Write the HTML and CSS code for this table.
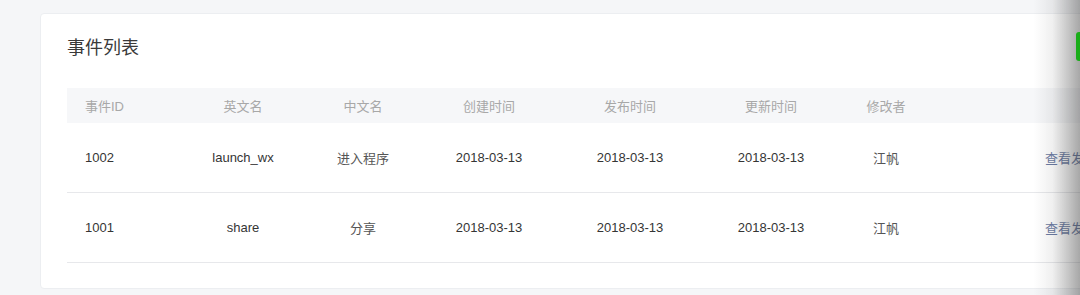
FILE: index.html
```html
<!DOCTYPE html>
<html lang="zh">
<head>
<meta charset="utf-8">
<link rel="stylesheet" href="styles.css">
</head>
<body>
<div class="card">
  <h2 class="title">事件列表</h2>
  <div class="table">
    <div class="row head">
      <div class="c first">事件ID</div>
      <div class="c">英文名</div>
      <div class="c">中文名</div>
      <div class="c">创建时间</div>
      <div class="c">发布时间</div>
      <div class="c">更新时间</div>
      <div class="c">修改者</div>
      <div class="c act"></div>
    </div>
    <div class="row">
      <div class="c first">1002</div>
      <div class="c">launch_wx</div>
      <div class="c cjk">进入程序</div>
      <div class="c">2018-03-13</div>
      <div class="c">2018-03-13</div>
      <div class="c">2018-03-13</div>
      <div class="c cjk">江帆</div>
      <div class="c act"><a class="link">查看发布记录</a></div>
    </div>
    <div class="row">
      <div class="c first">1001</div>
      <div class="c">share</div>
      <div class="c cjk">分享</div>
      <div class="c">2018-03-13</div>
      <div class="c">2018-03-13</div>
      <div class="c">2018-03-13</div>
      <div class="c cjk">江帆</div>
      <div class="c act"><a class="link">查看发布记录</a></div>
    </div>
  </div>
</div>
<div class="edge-shadow"></div>
<div class="green-tab"></div>
</body>
</html>
```
FILE: styles.css
```css
html, body {
  margin: 0;
  padding: 0;
  width: 1080px;
  height: 295px;
  overflow: hidden;
  background: #f5f6f8;
  font-family: "Liberation Sans", "Noto Sans CJK SC", sans-serif;
}
.card {
  margin: 13px 0 0 40px;
  width: 1120px;
  box-sizing: border-box;
  background: #fff;
  border: 1px solid #eceef1;
  border-radius: 4px;
  padding: 20px 0 25px 26px;
}
.title {
  margin: 0;
  font-size: 18px;
  line-height: 24px;
  font-weight: normal;
  color: #3a3a3a;
  font-family: "Noto Sans CJK SC", "Liberation Sans", sans-serif;
}
.table {
  margin-top: 30px;
  width: 1060px;
}
.row {
  display: grid;
  grid-template-columns: 116px 120px 120px 132px 150px 132px 98px 1fr;
  height: 70px;
  box-sizing: border-box;
  align-items: center;
  border-bottom: 1px solid #e7e8eb;
  font-size: 13px;
  color: #353535;
}
.row.head {
  height: 35px;
  background: #f6f7f9;
  border-bottom: none;
  color: #a8a8a8;
}
.c {
  text-align: center;
  white-space: nowrap;
}
.c.cjk {
  color: #555;
}
.c.first {
  text-align: left;
  padding-left: 18px;
}
.c.act {
  text-align: left;
  padding-left: 110px;
  overflow: hidden;
}
.link {
  color: #6b7ba3;
  text-decoration: none;
}
.edge-shadow {
  position: fixed;
  top: 0;
  right: 0;
  width: 46px;
  height: 295px;
  background: linear-gradient(to right, rgba(60,60,60,0), rgba(60,60,60,0.08) 40%, rgba(60,60,60,0.45));
}
.green-tab {
  position: fixed;
  left: 1076px;
  top: 32px;
  width: 14px;
  height: 29px;
  border-radius: 3px;
  background: #1aad19;
}
```
